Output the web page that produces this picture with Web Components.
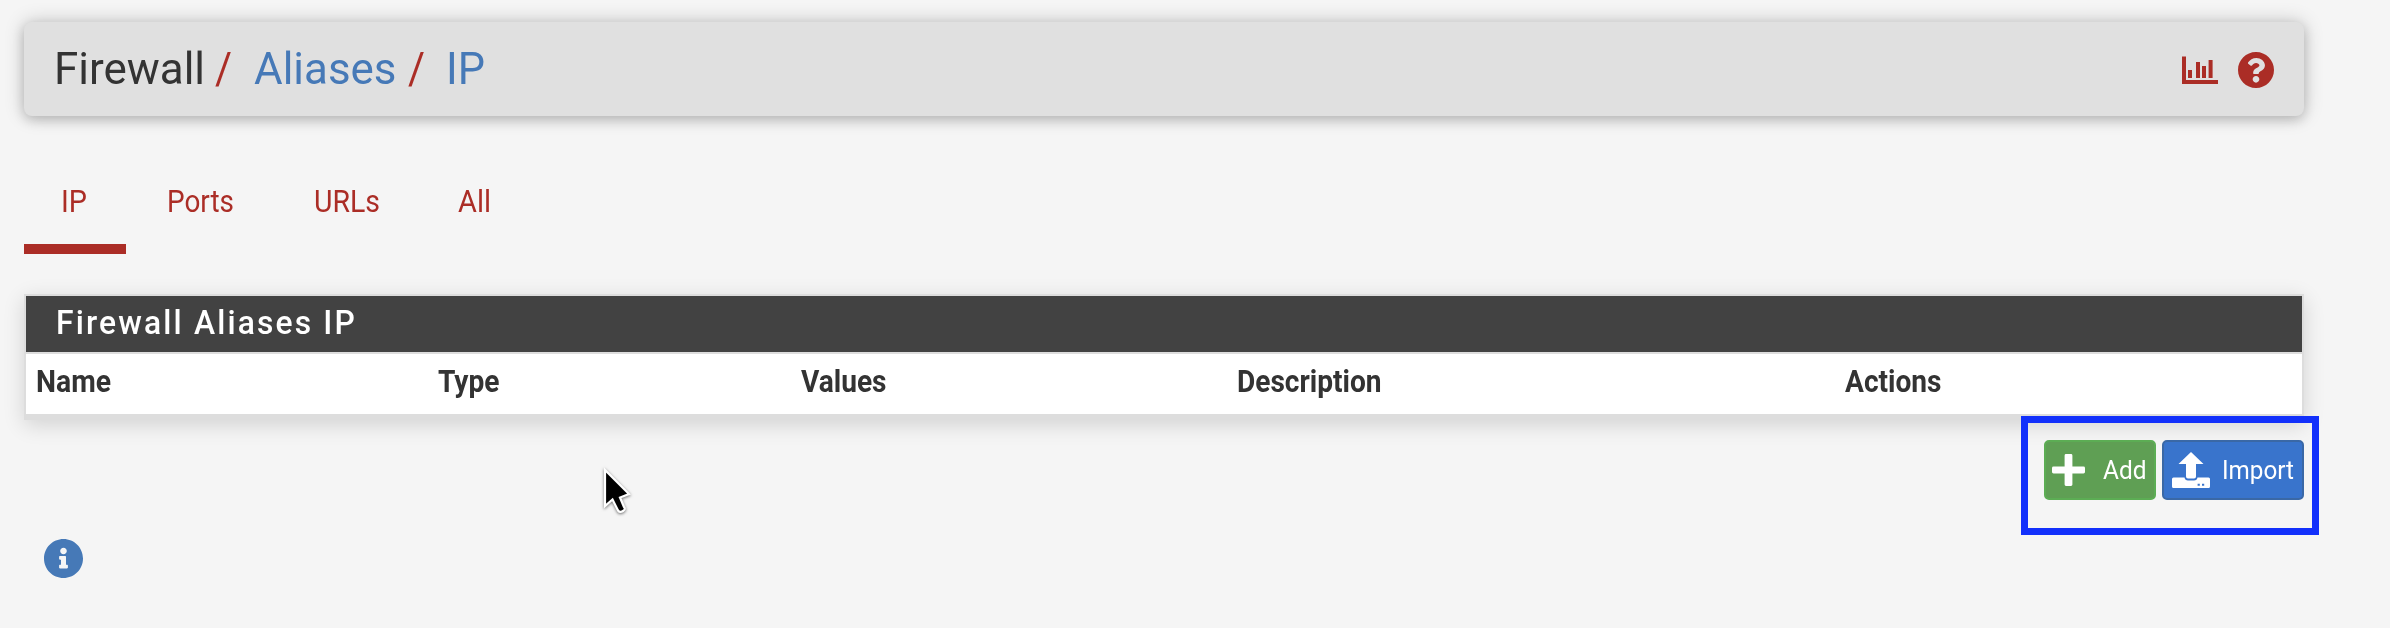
<!DOCTYPE html>
<html lang="en">
<head>
<meta charset="utf-8">
<title>Firewall: Aliases: IP</title>
<style>
  html, body { margin: 0; height: 628px; overflow: hidden; }
  body { background: #f5f5f5; color: #333; font-family: Roboto, "Liberation Sans", sans-serif; }
</style>
</head>
<body>
<alias-page></alias-page>

<script>
const define = (name, html, init) => customElements.define(name, class extends HTMLElement {
  constructor() {
    super();
    this.attachShadow({ mode: 'open' }).innerHTML = html;
  }
  connectedCallback() { if (init) init(this, this.shadowRoot); }
});

/* Text set to a fixed advance width, condensed to fit. */
define('fit-text', `
  <style>
    :host { display: inline-block; flex: none; white-space: nowrap; }
    span { display: inline-block; transform-origin: 0 50%; }
  </style><span><slot></slot></span>`, (el, root) => {
  const w = +el.getAttribute('w');
  const span = root.querySelector('span');
  el.style.width = w + 'px';
  span.style.transform = 'scaleX(' + w / span.getBoundingClientRect().width + ')';
});

const ICONS = {
  chart: '<svg viewBox="0 0 36 28" width="36" height="28"><path d="M0 .6h4V24h32v4H0zM6 14h4v8H6zM14 6h4v16h-4zM20 10h4v12h-4zM26.6 4h4v18h-4z"/></svg>',
  help: '<svg viewBox="8 8 496 496" width="36" height="36"><path d="M504 256c0 136.997-111.043 248-248 248S8 392.997 8 256C8 119.083 119.043 8 256 8s248 111.083 248 248zM262.655 90c-54.497 0-89.255 22.957-116.549 63.758-3.536 5.286-2.353 12.415 2.715 16.258l34.699 26.31c5.205 3.947 12.621 3.008 16.665-2.122 17.864-22.658 30.113-35.797 57.303-35.797 20.429 0 45.698 13.148 45.698 32.958 0 14.976-12.363 22.667-32.534 33.976C247.128 238.528 216 254.941 216 296v4c0 6.627 5.373 12 12 12h56c6.627 0 12-5.373 12-12v-1.333c0-28.462 83.186-29.647 83.186-106.667 0-58.002-60.165-102-116.531-102zM256 338c-25.365 0-46 20.635-46 46 0 25.364 20.635 46 46 46s46-20.636 46-46c0-25.364-20.635-46-46-46z"/></svg>',
  info: '<svg viewBox="8 8 496 496" width="39" height="39"><path d="M256 8C119.043 8 8 119.083 8 256c0 136.997 111.043 248 248 248s248-111.003 248-248C504 119.083 392.957 8 256 8zm0 110c23.196 0 42 18.804 42 42s-18.804 42-42 42-42-18.804-42-42 18.804-42 42-42zm56 254c0 6.627-5.373 12-12 12h-88c-6.627 0-12-5.373-12-12v-24c0-6.627 5.373-12 12-12h12v-64h-12c-6.627 0-12-5.373-12-12v-24c0-6.627 5.373-12 12-12h64c6.627 0 12 5.373 12 12v100h12c6.627 0 12 5.373 12 12v24z"/></svg>',
  plus: '<svg viewBox="0 0 33 32" width="33" height="32"><path d="M14 0h5q1.400 0 1.400 1.400V12.600H31.500Q33 12.600 33 14v4q0 1.400-1.500 1.400H20.400V30.600Q20.400 32 19 32h-5q-1.400 0-1.400-1.400V19.400H1.500Q0 19.400 0 18v-4q0-1.400 1.500-1.400H12.600V1.400Q12.600 0 14 0z"/></svg>',
  upload: '<svg viewBox="0 0 38 36" width="38" height="36"><path d="M19 0 31.500 12H24V24.500Q24 26.500 22 26.500H16Q14 26.500 14 24.500V12H6.500z"/><path fill-rule="evenodd" d="M1.500 25.500H12.500Q13 28.500 16 28.500H22Q25 28.500 25.500 25.500H36.500Q38 25.500 38 27V34.500Q38 36 36.500 36H1.500Q0 36 0 34.500V27Q0 25.500 1.500 25.500zM25.600 31.800v2h2.200v-2zM30 31.800v2h2.200v-2z"/></svg>'
};
define('ui-icon', `<style>:host { display: block; flex: none; } svg { display: block; fill: currentColor; }</style><div></div>`,
  (el, root) => { root.querySelector('div').innerHTML = ICONS[el.getAttribute('name')]; });

define('page-heading', `
  <style>
    :host { display: flex; align-items: center; box-sizing: border-box; width: 2280px; height: 94px;
      padding: 0 30px 0 29.500px; border-radius: 8px; background: #e0e0e0;
      box-shadow: 0 4px 12px rgba(0,0,0,.16), 0 0 20px rgba(0,0,0,.2);
      font-size: 45px; line-height: 94px; }
    .icons { margin: 2px 0 0 auto; display: flex; align-items: center; gap: 20px; color: #ab2d26; }
  </style>
  <slot></slot><div class="icons"><ui-icon name="chart"></ui-icon><ui-icon name="help"></ui-icon></div>`);

define('tab-link', `
  <style>
    :host { display: block; box-sizing: border-box; height: 92px; padding: 15px 36px 0;
      color: #ab2d26; font-size: 31px; line-height: 50px; border-bottom: 10px solid transparent; }
    :host([active]) { border-color: #ab2d26; width: 102px; }
  </style><slot></slot>`);

define('tab-bar', `<style>:host { display: flex; margin-top: 46px; }</style><slot></slot>`);

define('data-panel', `
  <style>
    :host { display: block; box-sizing: border-box; width: 2280px; height: 126px; margin-top: 40px;
      background: #fff; border: 2px solid #ddd; border-bottom-width: 6px;
      box-shadow: 0 5px 20px rgba(0,0,0,.14); }
    .title { height: 56px; padding-left: 30px; background: #424242; color: #fff; border-bottom: 2px solid #ddd;
      font-size: 32.500px; font-weight: 500; letter-spacing: 2.200px; line-height: 55px; }
    .head { display: grid; grid-template-columns: 402px 363px 435.500px 608px 1fr; padding-left: 10px;
      font-size: 31px; font-weight: 700; line-height: 55px; }
  </style>
  <div class="title"><slot name="title"></slot></div><div class="head"><slot></slot></div>`);

define('action-button', `
  <style>
    :host { display: flex; align-items: center; box-sizing: border-box; height: 60px; border: 2px solid #5cad54;
      border-radius: 5px; background: #5f9f54; color: #fff; font-size: 25.500px; line-height: 54px; }
    :host([kind=import]) { background: #3974cc; border-color: #3a68a6; }
  </style><slot></slot>`);

define('button-group', `
  <style>
    :host { display: flex; gap: 6px; box-sizing: border-box; position: relative;
      margin: -4px 0 0 1997px; width: 298px; height: 119px; padding: 17px 0 0 16px;
      border: 7px solid #1230fb; }
  </style><slot></slot>`);

define('mouse-pointer', `
  <style>:host { position: absolute; left: 601.500px; top: 466.500px; } svg { display: block; overflow: visible; filter: drop-shadow(0 1px 1.500px rgba(0,0,0,.55)); }</style>
  <svg width="30" height="48" viewBox="0 0 30 48"><path d="M3 3V39L10.500 32.500 16 43.500Q18 46 21 44T22 40L18 30.500 27 27z" fill="#000" stroke="#fff" stroke-width="2.200"/></svg>`);

define('alias-page', `
  <style>
    :host { display: block; padding: 22px 0 0 24px; }
    .c { color: #4679b7; } .s { color: #ab2d26; }
    .info { color: #4679b7; margin: 4px 0 0 20px; }
  </style>
  <page-heading>
    <fit-text w="151">Firewall</fit-text>
    <fit-text class="s" w="17" style="margin-left:10.500px">/</fit-text>
    <fit-text class="c" w="142.500" style="margin-left:22px">Aliases</fit-text>
    <fit-text class="s" w="17" style="margin-left:11px">/</fit-text>
    <fit-text class="c" w="39" style="margin-left:21px">IP</fit-text>
  </page-heading>
  <tab-bar>
    <tab-link active><fit-text w="26" style="margin-left:1px">IP</fit-text></tab-link>
    <tab-link><fit-text w="67" style="margin-left:5px">Ports</fit-text></tab-link>
    <tab-link><fit-text w="66" style="margin-left:8px">URLs</fit-text></tab-link>
    <tab-link><fit-text w="33" style="margin-left:6px">All</fit-text></tab-link>
  </tab-bar>
  <data-panel>
    <fit-text slot="title" w="301">Firewall Aliases IP</fit-text>
    <fit-text w="75">Name</fit-text>
    <fit-text w="61.500">Type</fit-text>
    <fit-text w="85.500">Values</fit-text>
    <fit-text w="144.500">Description</fit-text>
    <fit-text w="96.500">Actions</fit-text>
  </data-panel>
  <button-group>
    <action-button style="width:112px;padding-left:6px"><ui-icon name="plus"></ui-icon><fit-text w="43.500" style="margin-left:18px">Add</fit-text></action-button>
    <action-button kind="import" style="width:142px;padding-left:8px"><ui-icon name="upload"></ui-icon><fit-text w="72" style="margin-left:12px">Import</fit-text></action-button>
  </button-group>
  <ui-icon class="info" name="info"></ui-icon>
  <mouse-pointer></mouse-pointer>`);
</script>
</body>
</html>
